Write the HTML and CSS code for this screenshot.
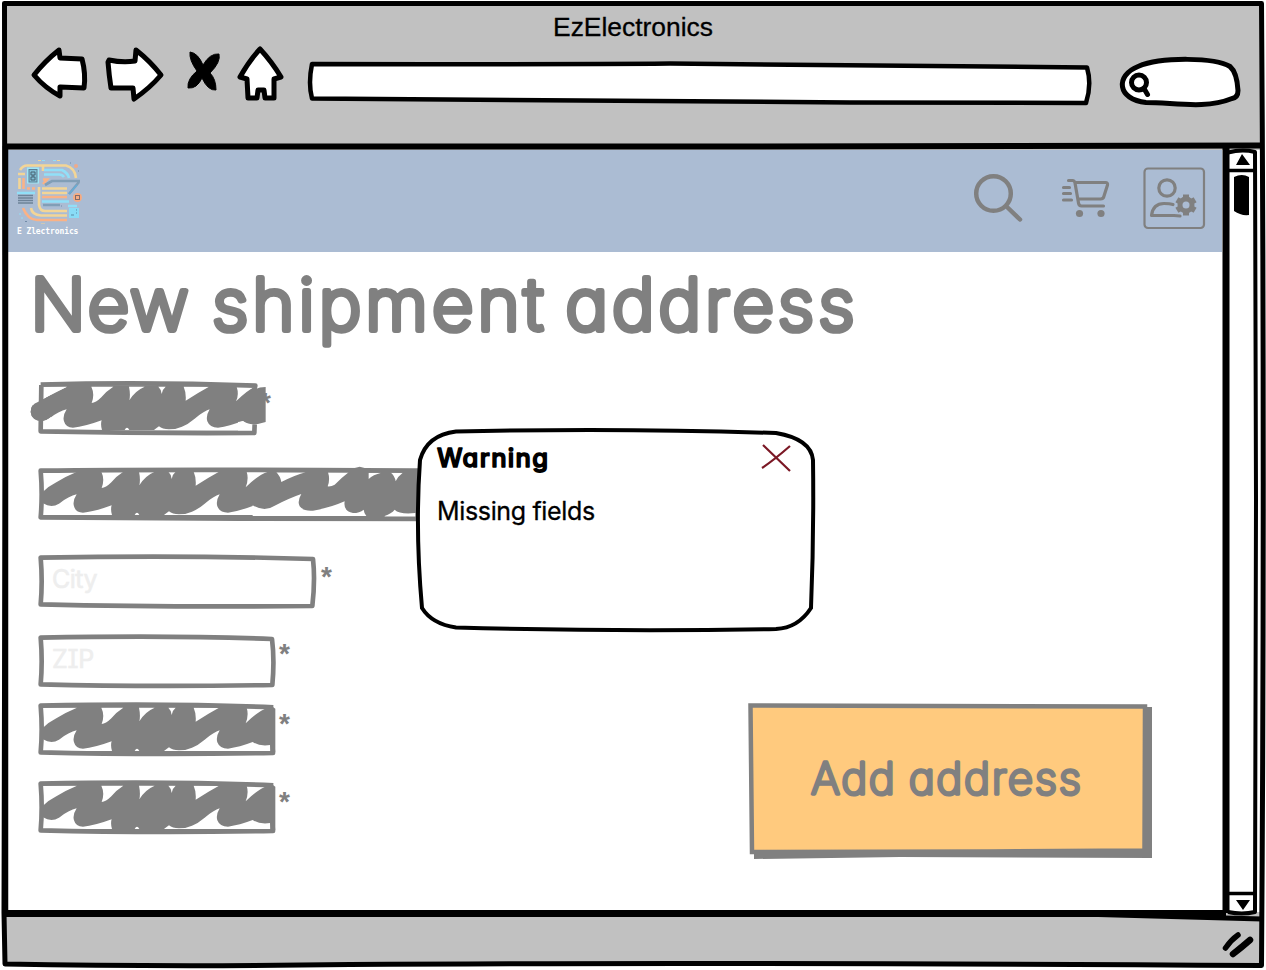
FILE: index.html
```html
<!DOCTYPE html>
<html lang="en">
<head>
<meta charset="utf-8">
<title>EzElectronics</title>
<link rel="stylesheet" href="styles.css">
</head>
<body>
<svg class="defs" width="0" height="0" aria-hidden="true">
  <defs>
    <!-- gaps left between the pen strokes, in thirds of a pixel from the field's corner -->
    <path id="gaps" d="M15 14H117Q85 27 55 46Q30 59 15 74ZM190 14H256Q235 27 220 46Q203 63 191 63Q201 37 190 14ZM303 14H350Q320 27 304 55Q308 37 303 14ZM391 14H413Q403 22 401 36Q400 22 391 14ZM467 14H543Q510 32 473 56Q475 32 467 14ZM15 109Q40 124 63 110Q93 87 116 82Q103 102 108 118Q113 137 135 137Q170 134 221 115Q217 127 222 144H15ZM290 144Q297 130 304 144ZM378 144Q386 138 393 133Q403 142 423 142Q445 142 462 134Q480 127 500 110Q528 87 545 82Q533 102 538 118Q545 137 570 137Q605 132 644 117Q665 131 697 126V144H378Z"/>
    <path id="gap-end" d="M626 14H690Q660 24 623 61Q633 37 626 14Z"/>
  </defs>
</svg>
<div class="window">
  <header class="toolbar">
    <h1 class="window-title">EzElectronics</h1>
    <div class="tools">
      <svg viewBox="30 45 67 60" width="67" height="60"><path class="tool" d="M59 50Q45 61 34 75Q45 88 60 96L60 87L84 88Q86 74 82 59L60 58Z"/></svg>
      <svg viewBox="97 45 75 60" width="75" height="60"><path class="tool" d="M109 60Q123 63 135 61L136 50Q150 61 161 75Q150 88 134 99L133 88L111 88Q109 75 108 62Z"/></svg>
      <svg viewBox="172 45 58 60" width="58" height="60"><path d="M190 52Q198 53 203 65Q210 53 219 54Q221 62 210 73Q216 79 216 90Q208 91 202 78Q197 89 188 88Q187 79 197 71Q189 60 190 52Z" stroke="#000"/></svg>
      <svg viewBox="230 45 66 60" width="66" height="60"><path class="tool" d="M260 49Q249 61 240 77L247 79L248 98L257 98L258 90L264 90L265 98L274 98L274 79L281 77Q272 62 260 49Z"/></svg>
      <svg viewBox="296 44.500 809 64" width="809" height="64"><path class="tool bar" d="M312 63.500Q560 64 670 63L1087 67Q1092 84 1086 102.500L850 102L312 98Q308 83 312 63.500Z"/></svg>
      <svg viewBox="1105 44.500 145 64" width="145" height="64"><path class="tool" d="M1146 102C1117 99 1115 75 1138 66C1162 56 1215 57 1230 66Q1237 72 1238 90Q1238 97 1232 98C1205 109 1174 102 1146 102Z"/><circle class="tool" cx="1139" cy="82" r="7.500"/><path class="tool" d="M1144 88L1147.500 94"/></svg>
    </div>
  </header>
  <div class="middle">
    <div class="page">
      <nav class="nav">
        <div class="brand">
          <svg viewBox="16 158 68 66" width="68" height="66">
            <g fill="none" stroke-width="2.600">
              <g stroke="#f3d596"><path d="M20 170Q23 165.500 27 165.500H43V171M44 165.500H66Q75 168 76 178M18 174H25M19.500 178V189M42 188.500H67M39 187V205Q40 211 45 211H67M42 193H67M31 208Q32 215 41 215.500H67"/></g>
              <g stroke="#fab286"><path d="M43 179.500H47L43 184M23.500 178V189M42 197H67M23 208Q28 220 37 220H67M27 188.500H30M32 188.500H35"/></g>
              <g stroke="#91dff8"><path d="M44 170H62Q68 173 69 178M44 174.500H58Q62 174 64 177M42 201.500H69M17 193H35M68 206H77"/></g>
              <path stroke="#819eb6" d="M80 181H52L45 185M79 182L69 194M43 205H60"/>
              <path stroke="#65add8" d="M77 185L69 194" stroke-width="1.500"/>
              <path stroke="#6d8298" stroke-width="1.300" d="M18 195.500H33M18 198H33M18 200.500H33M18 203H33"/>
            </g>
            <rect x="27" y="167.500" width="12" height="16" fill="#9ee7f6"/><rect x="29" y="169.500" width="8" height="12.500" fill="#80bdd4" stroke="#607e93"/><path d="M31 172H35V175H31ZM31 177H35V180H31ZM33 175V177" fill="none" stroke="#486273"/>
            <circle cx="77.500" cy="197.500" r="4.500" fill="#f6ab82"/><rect x="75.500" y="195.500" width="4" height="4" fill="none" stroke="#806b6b"/>
            <circle cx="76" cy="166" r="2" fill="#efaa89"/><path d="M69 208H79V218H69Z" fill="#89dcf6"/><path d="M71 215H74M76 210H77M76 213H77" stroke="#5b8ba7"/>
            <path d="M38 160.500H41M57 160.500H60M41 224H45" stroke="#f3d596"/><path d="M42 160.500H45M53 160.500H56M19 214H21M21 218H23" stroke="#91dff8"/><path d="M70 163H71M78 171H79M61 206H62M25 221.500H27" stroke="#718ba8"/>
          </svg>
          <span class="brand-name">E Zlectronics</span>
        </div>
        <div class="nav-icons">
          <svg viewBox="970 165 60 66" width="60" height="66"><g class="line" stroke-width="4.500"><circle cx="993.500" cy="193.500" r="17.300"/><path d="M1006.500 206.500L1020 219.500"/></g></svg>
          <svg viewBox="1059.500 165 54 66" width="54" height="66"><g class="line" stroke-width="3.200"><path d="M1069 180.500H1073Q1075 180.500 1075.500 183L1079 203Q1079.500 206 1082 206H1104M1075.500 182.500H1106Q1108.500 182.500 1108 185L1104.500 196Q1104 199 1101 199H1078.500M1064 187.500H1070M1064 193.500H1071M1064 200H1072"/></g><circle cx="1080" cy="213.500" r="3.600" fill="#808080"/><circle cx="1101.500" cy="213.500" r="3.600" fill="#808080"/></svg>
          <svg viewBox="1142 165 64 66" width="64" height="66"><rect class="line" x="1144.500" y="168.500" width="59.500" height="59.500" rx="3.500" stroke-width="2.200"/><g class="line" stroke-width="3.200"><circle cx="1167" cy="188" r="8.200"/><path d="M1173 204.500Q1170 203.500 1164 203.500Q1153 203.500 1151.500 215.500H1174L1180 216"/></g><g fill="#808080"><circle cx="1186" cy="205" r="8.500"/><path id="tooth" d="M1183 194.500H1189V215.500H1183Z"/><use href="#tooth" transform="rotate(60 1186 205)"/><use href="#tooth" transform="rotate(120 1186 205)"/></g><circle cx="1186" cy="205" r="3.500" fill="#abbcd3"/></svg>
        </div>
      </nav>
      <main class="content">
        <h2 class="heading"><svg viewBox="8 252 900 128" width="900" height="128"><text class="heading-text" y="330"><tspan x="30.500" textLength="158">New</tspan> <tspan x="212" textLength="331">shipment</tspan> <tspan x="565.500" textLength="289">address</tspan></text></svg></h2>
        <div class="columns">
          <div class="form">
            <div class="row r1">
              <span class="star">*</span>
              <svg class="box" viewBox="-30 -6 740 180" width="246.667" height="60"><path fill="#808080" d="M0 60Q-22 67 -22 90Q-20 115 12 118L15 145H640L651 128L683 120V15Q665 15 651 22V10H10Z"/><g transform="translate(-30 0)"><use href="#gaps"/></g><path class="gaps" d="M15 14H87L25 46L15 52ZM15 118Q28 114 40 104V140H15ZM596 14H652Q628 24 594 58Q604 38 596 14ZM616 118Q630 131 645 127V147H600V120Z"/><path class="edge" d="M8 8Q320 -1 652 11L646 35M650 127L649 153Q330 155 8 148L10 9"/><path class="blob" d="M0 60Q-22 67 -22 90Q-20 115 12 118Q30 112 45 100L40 40Z"/></svg>
            </div>
            <div class="row r2">
              <svg class="box" viewBox="-30 -6 1230 180" width="410" height="60"><path fill="#808080" d="M8 8H1200V148H8Z"/><g transform="translate(0 -3)"><use href="#gaps"/><use href="#gap-end"/></g><path class="gaps" d="M644 112Q680 133 710 113Q755 90 790 78Q777 100 785 115Q795 130 825 128Q875 120 920 100Q915 130 945 135Q965 135 977 125Q978 135 985 144H644ZM1040 144Q1060 137 1070 125Q1085 140 1132 135V146H1040ZM715 13H803Q775 20 730 42Q727 25 715 13ZM870 13H932Q910 30 890 50Q880 56 869 55Q877 35 870 13ZM992 14H1030Q1005 20 992 33ZM1057 13H1096Q1080 25 1073 40Q1070 23 1057 13Z"/><path class="edge" d="M1200 8Q400 3 8 8Q14 80 8 148L600 152L1200 153"/><path class="blob" d="M950 0L965 -4L980 0V25H950Z"/></svg>
            </div>
            <div class="row r3">
              <svg class="box" viewBox="-30 -6 870 180" width="290" height="60"><path class="edge" d="M8 8Q440 0 825 12Q832 75 823 153Q380 157 8 148Q14 80 8 8Z"/></svg>
              <span class="hint">City</span><span class="star">*</span>
            </div>
            <div class="row r4">
              <svg class="box" viewBox="-30 -6 750 180" width="250" height="60"><path class="edge" d="M8 8Q400 0 702 12Q710 75 703 150Q330 156 8 148Q14 80 8 8Z"/></svg>
              <span class="hint zip">ZIP</span><span class="star">*</span>
            </div>
            <div class="row r5">
              <svg class="box" viewBox="-30 -6 750 180" width="250" height="60"><path fill="#808080" d="M8 8H700L712 17V148H8Z"/><use href="#gaps"/><use href="#gap-end"/><path class="edge" d="M703 125L705 150Q330 156 8 148Q14 80 8 8Q400 0 706 13"/></svg>
              <span class="star">*</span>
            </div>
            <div class="row r6">
              <svg class="box" viewBox="-30 -6 750 180" width="250" height="60"><path fill="#808080" d="M8 8H700L712 17V148H8Z"/><use href="#gaps"/><use href="#gap-end"/><path class="edge" d="M703 125L705 150Q330 156 8 148Q14 80 8 8Q400 0 706 13"/></svg>
              <span class="star">*</span>
            </div>
          </div>
          <button class="add" type="button">
            <svg viewBox="745 700 410 162" width="410" height="162"><path fill="#808080" d="M754 708L1152 707V858L900 857L754 859Z"/><path d="M750.500 705.500L1145 706.500L1144.500 850.500L990 851.500L752 852Z" fill="#ffca7e" stroke="#808080" stroke-width="4.500"/><text class="add-label" x="811" y="793.500" textLength="270">Add address</text></svg>
          </button>
        </div>
      </main>
    </div>
    <svg class="scroll" viewBox="1222 150 40 762" width="40" height="762"><path d="M1222 150H1262V912H1222Z" fill="#fff"/><path d="M1236 165L1242 154L1250 165ZM1234 177Q1242 173 1249 177V215Q1241 216 1234 211ZM1236 900H1250L1243 910Z"/></svg>
  </div>
  <footer class="status">
    <svg viewBox="1220 928 36 32" width="36" height="32"><g fill="none" stroke="#000" stroke-linecap="round"><path d="M1225.500 948Q1231 940 1238 935" stroke-width="5.500"/><path d="M1233 954Q1242 947 1250 940" stroke-width="6.500"/></g></svg>
  </footer>
  <svg class="frame" viewBox="0 0 1266 970" width="1266" height="970">
    <g fill="none" stroke="#000" stroke-width="5" stroke-linejoin="round">
      <path d="M4.500 3.500L400 3.500H1261.500Q1265 480 1261.500 965.500Q700 962 350 964.500Q170 967 5 964L4 913L5 480Z"/>
      <path d="M4 146.500L700 146.500L1262 145.500" stroke-width="6"/>
      <path d="M5.500 146V914" stroke-width="5.500"/>
      <path d="M4 913.500L1226 913.500" stroke-width="7"/><path d="M1080 914L1262 919" stroke-width="5"/>
      <path d="M1226 148V913" stroke-width="7"/>
      <path d="M1228 152.500Q1242 149 1255 152L1256 500L1255 912Q1242 915 1228 912" stroke-width="4"/><path d="M1228 170.500H1257M1228 893.500H1257" stroke-width="3.500"/>
    </g>
  </svg>
  <section class="dialog" role="dialog">
    <svg class="dialog-bg" viewBox="414 426 404 208" width="404" height="208"><path d="M456 431.500Q620 428 776 433Q811 439 813 460Q814 535 811 608Q798 628 776 629Q620 632 456 627.500Q432 624 422 608Q415 530 420 460Q427 435 456 431.500Z" fill="#fff" stroke="#000" stroke-width="4"/></svg>
    <div class="dialog-head">
      <h3><svg viewBox="436 442 120 35" width="120" height="35"><text class="dialog-title" x="437" y="467" textLength="111">Warning</text></svg></h3>
      <svg viewBox="761 442 30 30" width="30" height="30"><path d="M763 445L790 471M762 468Q774 460 790 446" fill="none" stroke="#7b1825" stroke-width="2.200"/></svg>
    </div>
    <p class="dialog-text">Missing fields</p>
  </section>
</div>
</body>
</html>
```
FILE: styles.css
```css
* { box-sizing: border-box; }
body { margin: 0; background: #fff; font-family: Inter, "Liberation Sans", sans-serif; font-feature-settings: "cv11"; }
h1, h2, h3, p { margin: 0; font-weight: 400; white-space: nowrap; }
svg { display: block; flex: none; }
.defs { position: absolute; }
.window { position: relative; width: 1266px; height: 970px; overflow: hidden; display: flex; flex-direction: column; }
.toolbar { flex: none; margin: 3px 4px 0; height: 147px; background: #c1c1c1; }
.window-title { height: 42px; padding-top: 9px; font-family: "Liberation Sans", Arial, sans-serif; font-size: 26.4px; line-height: 30px; text-align: center; -webkit-text-stroke: .3px #000; }
.tools { display: flex; align-items: flex-start; padding-left: 26px; }
.tool { fill: #fff; stroke: #000; stroke-width: 5; stroke-linejoin: round; stroke-linecap: round; }
.bar { stroke-width: 4.5; }
.middle { display: flex; height: 762px; flex: none; padding-left: 8px; }
.page { width: 1214px; background: #fff; }
.nav { display: flex; justify-content: space-between; height: 102px; padding: 8px 16px 0 8px; background: #abbcd3; }
.brand-name { display: block; margin-top: 3px; padding-left: 1px; font: 700 8px/10px "DejaVu Sans Mono", monospace; letter-spacing: -.1px; color: #fff; }
.nav-icons { display: flex; gap: 29px; padding-top: 7px; }
.line { fill: none; stroke: #808080; stroke-linecap: round; stroke-linejoin: round; }
.heading { height: 128px; }
.heading-text { font-size: 72px; font-weight: 200; fill: #808080; stroke: #808080; stroke-width: 5.8px; stroke-linejoin: round; }
.columns { display: flex; justify-content: space-between; align-items: flex-start; padding-right: 67px; }
.form { padding-left: 20px; }
.row { position: relative; display: flex; width: 390px; height: 60px; }
.r1 { margin-bottom: 26px; }
.r2 { margin-bottom: 27px; }
.r3 { margin-bottom: 20px; }
.r4 { margin-bottom: 8px; }
.r5 { margin-bottom: 18px; }
#gaps, #gap-end, .gaps { fill: #fff; }
.edge { fill: none; stroke: #808080; stroke-width: 14; stroke-linejoin: round; }
.blob { fill: #808080; }
.hint { position: absolute; left: 24px; top: 11px; font-size: 25px; line-height: 30px; letter-spacing: -.5px; color: #eee; -webkit-text-stroke: .6px #eee; }
.zip { font-feature-settings: "cv08"; letter-spacing: -.3px; }
.star { font: 700 28px/28px "Liberation Sans", Arial, sans-serif; margin: 10px 0 0 3px; color: #808080; }
.r4 .star, .r5 .star, .r6 .star { margin-left: 1px; }
.r4 .star { margin-top: 7px; }
.r5 .star, .r6 .star { margin-top: 9px; }
.r1 .star { position: absolute; left: 232px; top: 0; margin: 9px 0 0; }
.r1 .box { position: relative; }
.add { width: 410px; height: 162px; margin-top: 320px; padding: 0; border: 0; background: none; font: inherit; }
.add-label { font-size: 44px; font-weight: 200; fill: #808080; stroke: #808080; stroke-width: 3.4px; stroke-linejoin: round; word-spacing: -2px; }
.status { height: 58px; flex: none; margin: 0 4px; padding: 16px 6px 0 0; background: #c1c1c1; display: flex; justify-content: flex-end; clip-path: inset(0 0 6px 0); }
.frame { position: absolute; inset: 0; pointer-events: none; }
.dialog { position: absolute; left: 414px; top: 426px; width: 404px; height: 208px; padding: 16px 27px 0 22px; }
.dialog-bg { position: absolute; inset: 0; }
.dialog-head { position: relative; display: flex; height: 32px; justify-content: space-between; }
.dialog-title { font-size: 25.5px; font-weight: 500; stroke: #000; stroke-width: 1.5px; stroke-linejoin: round; }
.dialog-text { position: relative; margin-top: 22px; padding-left: 1px; font-size: 25px; line-height: 30px; letter-spacing: -.35px; -webkit-text-stroke: .3px #000; }
```
